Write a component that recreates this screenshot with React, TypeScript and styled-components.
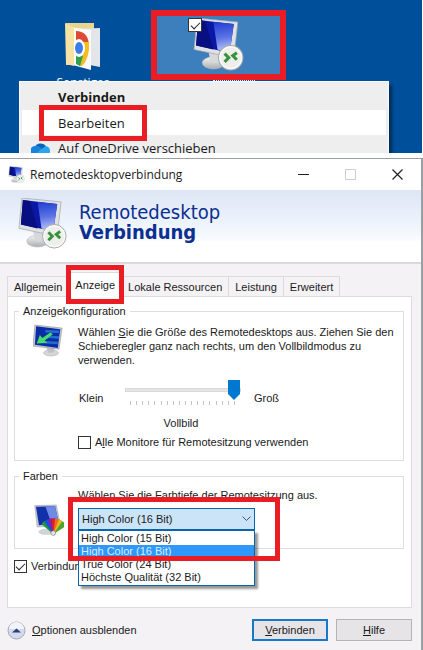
import React, { useState } from "react";
import styled, { createGlobalStyle } from "styled-components";

const Global = createGlobalStyle`
  *, *::before, *::after { box-sizing: border-box; }
  body { margin: 0; background: #fff; }
  button, input, select { font: inherit; color: inherit; margin: 0; }
`;

const classic = `"Liberation Sans", Arial, sans-serif`;
const modern = `"Open Sans", "Segoe UI", sans-serif`;
const heading = `"DejaVu Sans Condensed", "Noto Sans", Tahoma, sans-serif`;

const Page = styled.main`
  display: flex;
  flex-direction: column;
  gap: 5px;
  min-height: 100vh;
  font: 11px/14px ${classic};
  color: #1a1a1a;
`;

const Mark = styled.span<{ $inset: string; $w?: number }>`
  position: absolute;
  inset: ${(p) => p.$inset};
  border: ${(p) => p.$w ?? 5}px solid #ea1c24;
  pointer-events: none;
  z-index: 3;
`;

const CheckBox = styled.input`
  appearance: none;
  display: grid;
  place-items: center;
  flex: none;
  width: 13px;
  height: 13px;
  border: 1px solid #333;
  background: #fff;
  &:checked::after {
    content: "";
    width: 9px;
    height: 5px;
    border: solid #222;
    border-width: 0 0 1px 1px;
    transform: translateY(-1px) rotate(-45deg);
  }
`;

/* desktop */
const Desktop = styled.section`
  height: 153px;
  margin-right: 1px;
  overflow: hidden;
  background: #004f9b;
  font: 13px/18px ${modern};
`;

const Shortcuts = styled.div`
  display: flex;
  gap: 34px;
  height: 81px;
  padding: 10px 0 0 49px;
  overflow: hidden;
`;

const Shortcut = styled.div<{ $selected?: boolean }>`
  position: relative;
  display: flex;
  flex-direction: column;
  align-items: center;
  flex: none;
  width: ${(p) => (p.$selected ? 135 : 68)}px;
  height: ${(p) => (p.$selected ? 70 : 90)}px;
  padding-top: ${(p) => (p.$selected ? 8 : 13)}px;
  background: ${(p) => (p.$selected ? "#3c7fbc" : "transparent")};
`;

const ShortcutName = styled.span`
  color: #fff;
  font-size: 12px;
  margin-top: 3px;
`;

const Picked = styled(CheckBox)`
  position: absolute;
  left: 37px;
  top: 8px;
  width: 14px;
  height: 14px;
`;

const FocusDots = styled.span`
  position: absolute;
  left: 62px;
  top: 70px;
  width: 42px;
  border-top: 1px dotted #d8e4ee;
`;

const Menu = styled.div`
  display: flex;
  flex-direction: column;
  width: 370px;
  max-width: calc(100% - 20px);
  margin-left: 19px;
  padding: 2px;
  background: #eee;
  border: 1px solid #f8f8f8;
  border-bottom: 0;
  box-shadow: 3px 4px 3px rgba(0, 0, 0, 0.45);
`;

const MenuRow = styled.button<{ $bold?: boolean; $hover?: boolean }>`
  display: flex;
  align-items: center;
  gap: 7px;
  height: ${(p) => (p.$hover ? 25 : 26)}px;
  padding: 0 0 0 9px;
  border: 0;
  background: ${(p) => (p.$hover ? "#fff" : "transparent")};
  font-weight: ${(p) => (p.$bold ? 700 : 400)};
  text-align: left;
  white-space: nowrap;
`;

const MenuIcon = styled.span`
  display: flex;
  width: 20px;
`;

const MenuText = styled.span`
  position: relative;
`;

/* dialog */
const Dialog = styled.section`
  display: flex;
  flex: 1;
  flex-direction: column;
  background: #f5f2f6;
  border: solid #9a9fa3;
  border-width: 1px 2px 0 0;
`;

const TitleBar = styled.header`
  display: flex;
  align-items: center;
  gap: 5px;
  height: 31px;
  padding-left: 8px;
  background: #fff;
  font: 12px/16px ${modern};
`;

const Title = styled.span`
  flex: 1;
  white-space: nowrap;
`;

const CaptionButton = styled.button`
  display: grid;
  place-items: center;
  width: 47px;
  height: 30px;
  padding: 0;
  border: 0;
  background: none;
`;

const CaptionButtons = styled.div`
  display: flex;
`;

const Banner = styled.div`
  display: flex;
  gap: 11px;
  height: 74px;
  padding: 8px 0 0 17px;
  background: linear-gradient(#dde6f5, #edf3fc 45%, #f8fbff 69%, #fff 72%);
  border-bottom: 2px solid #dad8dc;
`;

const BannerTitle = styled.h1`
  margin: 4px 0 0;
  color: #0b3090;
  font: 400 20px/20px ${heading};
  strong { display: block; }
`;

const Body = styled.div`
  display: flex;
  flex-direction: column;
  padding: 12px 9px 8px 7px;
`;

const Tabs = styled.div`
  display: flex;
  align-items: flex-end;
  height: 20px;
`;

const Tab = styled.button<{ $active?: boolean }>`
  position: relative;
  height: ${(p) => (p.$active ? 25 : 20)}px;
  padding: 0 6px;
  border: 1px solid #dedbdf;
  border-bottom: 0;
  margin: 0 -1px ${(p) => (p.$active ? -1 : 0)}px 0;
  background: ${(p) => (p.$active ? "#fff" : "#f5f2f6")};
  z-index: ${(p) => (p.$active ? 1 : 0)};
  white-space: nowrap;
`;

const Panel = styled.div`
  display: flex;
  flex-direction: column;
  height: 312px;
  padding: 7px 7px 0 6px;
  background: #fff;
  border: 1px solid #dedbdf;
`;

const Group = styled.fieldset<{ $h: number }>`
  display: grid;
  grid-template-columns: 63px 1fr;
  align-items: start;
  min-width: 0;
  height: ${(p) => p.$h}px;
  margin: 0 0 8px;
  padding: 0;
  border: 1px solid #dedede;
`;

const Legend = styled.legend`
  margin-left: 4px;
  padding: 0 4px;
`;

const GroupIcon = styled.div<{ $top: number }>`
  display: flex;
  padding: ${(p) => p.$top}px 0 0 18px;
`;

const GroupContent = styled.div<{ $top: number }>`
  padding-top: ${(p) => p.$top}px;
`;

const Copy = styled.p`
  margin: 0;
  max-width: 330px;
`;

const SliderRow = styled.label`
  display: grid;
  grid-template-columns: 47px 116px auto;
  margin-top: 12px;
`;

const SliderWord = styled.span<{ $indent: number }>`
  padding: 12px 0 0 ${(p) => p.$indent}px;
`;

const SliderBox = styled.span`
  display: flex;
  flex-direction: column;
`;

const Range = styled.input`
  appearance: none;
  width: 100%;
  height: 22px;
  background: none;
  &::-webkit-slider-runnable-track {
    height: 4px;
    background: #e5e5e5;
    border: 1px solid #d9d9d9;
  }
  &::-webkit-slider-thumb {
    appearance: none;
    width: 12px;
    height: 20px;
    margin-top: -9px;
    background: #0078d0;
    clip-path: polygon(0 0, 100% 0, 100% 70%, 50% 100%, 0 70%);
  }
`;

const Ticks = styled.span`
  display: flex;
  justify-content: space-between;
  padding: 0 6px 0 5px;
  i { width: 1px; height: 4px; background: #c4c4c4; }
`;

const SliderValue = styled.output`
  display: block;
  width: 206px;
  margin-top: 11px;
  text-align: center;
`;

const Check = styled.label<{ $top: number }>`
  display: flex;
  align-items: center;
  gap: 4px;
  margin-top: ${(p) => p.$top}px;
  white-space: nowrap;
`;

const Combo = styled.div`
  position: relative;
  width: 177px;
  margin-top: 6px;
`;

const ComboSelect = styled.select`
  appearance: none;
  display: block;
  width: 100%;
  height: 22px;
  padding: 0 3px;
  border: 1px solid #0a64ad;
  border-radius: 0;
  background: #cce4f7;
`;

const Chevron = styled.svg`
  position: absolute;
  right: 4px;
  top: 8px;
  pointer-events: none;
`;

const Options = styled.ul`
  position: absolute;
  top: 22px;
  left: 0;
  right: 0;
  z-index: 2;
  margin: 0;
  padding: 1px 0;
  list-style: none;
  background: #fff;
  border: 1px solid #0a64ad;
  box-shadow: 3px 3px 2px rgba(0, 0, 0, 0.4);
`;

const Option = styled.li<{ $on: boolean }>`
  padding: 0 2px;
  line-height: 13px;
  color: ${(p) => (p.$on ? "#d8ecff" : "inherit")};
  background: ${(p) => (p.$on ? "#3097fb" : "transparent")};
`;

const Footer = styled.footer`
  display: flex;
  align-items: center;
  gap: 8px;
  margin-top: 11px;
`;

const Toggle = styled.button`
  display: flex;
  align-items: center;
  gap: 6px;
  margin-right: auto;
  padding: 0;
  border: 0;
  background: none;
`;

const Button = styled.button<{ $primary?: boolean }>`
  width: 76px;
  height: 22px;
  padding: 0;
  background: #e7e4e8;
  border: ${(p) => (p.$primary ? "2px solid #1878c8" : "1px solid #b5b3b6")};
`;

function RemoteIcon({ size }: { size: number }) {
  return (
    <svg width={size} height={size} viewBox="0 0 50 52" aria-hidden="true">
      <defs>
        <linearGradient id="glare" x1="0.4" y1="0" x2="0.5" y2="1">
          <stop offset="0" stopColor="#2440d4" />
          <stop offset="0.5" stopColor="#5a72e4" />
          <stop offset="1" stopColor="#c3cffc" />
        </linearGradient>
        <linearGradient id="stand" x1="0" y1="0" x2="0" y2="1">
          <stop offset="0" stopColor="#f5f5f3" />
          <stop offset="1" stopColor="#a9adb2" />
        </linearGradient>
      </defs>
      <ellipse cx="20" cy="44" rx="11" ry="6" fill="url(#stand)" stroke="#b4b7ba" strokeWidth=".6" />
      <path d="M15 32l12 3-1 8q-5 3-9-1z" fill="#d6d8da" />
      <path d="M4 0L44 4 40 39 1 31z" fill="#dfe1e3" stroke="#a0a5aa" strokeWidth=".7" />
      <path d="M5 2L40 6 36 34 3 27z" fill="#0b18a4" />
      <path d="M5 2l7 1 8 28-17-4z" fill="#080f80" />
      <path d="M20 4L40 6 36 34 24 31z" fill="url(#glare)" />
      <circle cx="37" cy="39" r="12" fill="#fafaf8" stroke="#a6a9aa" />
      <circle cx="37" cy="39" r="10" fill="#eeefed" />
      <path d="M31 35l4 4-4 4M43 34l-4 3 4 4" fill="none" stroke="#37913a" strokeWidth="3" />
    </svg>
  );
}

function ScreenIcon() {
  return (
    <svg width="31" height="33" viewBox="0 0 50 52" aria-hidden="true">
      <ellipse cx="29" cy="46" rx="12" ry="5" fill="#d3d6d9" stroke="#b6b9bc" />
      <path d="M21 36l13-2v11l-9 1z" fill="#bfc2c5" />
      <path d="M3 1l44 5-5 34-42-5z" fill="#c4c9ce" stroke="#9298a0" />
      <path d="M5 3l39 5-4 30-37-5z" fill="#0a2ca6" />
      <path d="M20 11l22 1M22 20l20 1M20 29l20 1" stroke="#2170cc" strokeWidth="4" />
      <path d="M28 13L15 22l-4-5-5 14 17-1-4-4 13-10z" fill="#45dc6a" />
    </svg>
  );
}

function ColorsIcon() {
  const fan = ["#1a9a3c", "#1d50d8", "#8a1cae", "#d8202c", "#ee6a1c", "#e8b81c", "#4aa82c"];
  return (
    <svg width="31" height="33" viewBox="0 0 52 54" aria-hidden="true">
      <ellipse cx="22" cy="46" rx="13" ry="5" fill="#d0d3d7" />
      <path d="M3 2l36-1 7 34-39 3z" fill="#c3c9d6" stroke="#9ba2b2" />
      <path d="M5 4l32-1 6 27-33 5z" fill="#1230a8" />
      <path d="M21 4l16-1 6 27-12 2z" fill="#6f8ae4" />
      {fan.map((c, i) => (
        <path key={c} d="M34 50l-5-25q5-4 10 0z" fill={c} transform={`rotate(${-38 + i * 14} 34 50)`} />
      ))}
      <circle cx="34" cy="48" r="4" fill="#e3e4e6" stroke="#777" />
    </svg>
  );
}

function FolderIcon() {
  return (
    <svg width="36" height="48" viewBox="0 0 36 48" aria-hidden="true">
      <path d="M1 0h28v42H1z" fill="#ead58d" />
      <path d="M9 6l26-1v39l-26-5z" fill="#e3e5ea" />
      <path d="M4 4l22 3v40L4 41z" fill="#fafafa" />
      <path d="M11 8q12 0 13 14H11z" fill="#df4934" />
      <path d="M17 19h7q1 16-7 24h-3z" fill="#f5bd20" />
      <path d="M11 30l7 3-3 10-4-2z" fill="#2fa052" />
      <ellipse cx="14" cy="25" rx="6" ry="9" fill="#fff" />
      <ellipse cx="14" cy="25" rx="4" ry="6" fill="#3e7de8" />
      <path d="M0 0l9 5v38L1 41z" fill="#f6e3a3" />
    </svg>
  );
}

const tabs = ["Allgemein", "Anzeige", "Lokale Ressourcen", "Leistung", "Erweitert"];
const depths = ["High Color (15 Bit)", "High Color (16 Bit)", "True Color (24 Bit)", "Höchste Qualität (32 Bit)"];

export default function App() {
  const [depth, setDepth] = useState(depths[1]);
  return (
    <Page>
      <Global />
      <Desktop>
        <Shortcuts>
          <Shortcut>
            <FolderIcon />
            <ShortcutName>Sonstiges</ShortcutName>
          </Shortcut>
          <Shortcut $selected>
            <RemoteIcon size={53} />
            <Picked type="checkbox" defaultChecked aria-label="Verknüpfung auswählen" />
            <FocusDots />
            <Mark $inset="0" $w={6} />
          </Shortcut>
        </Shortcuts>
        <Menu>
          <MenuRow $bold><MenuIcon /><MenuText>Verbinden</MenuText></MenuRow>
          <MenuRow $hover>
            <MenuIcon />
            <MenuText>
              Bearbeiten
              <Mark $inset="-9px -22px -9px -19px" />
            </MenuText>
          </MenuRow>
          <MenuRow>
            <MenuIcon>
              <svg width="19" height="14" viewBox="0 0 19 14" aria-hidden="true">
                <path d="M4 6a6 5 0 0 1 11-1l-6 6z" fill="#0f62b8" />
                <path d="M4 5q4-1 9 5l-1 4H4A4 4 0 0 1 4 5z" fill="#1683dc" />
                <path d="M9 9l6-4q4 1 4 5t-4 4H4z" fill="#29a5ee" />
              </svg>
            </MenuIcon>
            <MenuText>Auf OneDrive verschieben</MenuText>
          </MenuRow>
        </Menu>
      </Desktop>

      <Dialog aria-label="Remotedesktopverbindung">
        <TitleBar>
          <RemoteIcon size={17} />
          <Title>Remotedesktopverbindung</Title>
          <CaptionButtons>
            <CaptionButton aria-label="Minimieren">
              <svg width="11" height="11"><path d="M0 5.5h11" stroke="#222" /></svg>
            </CaptionButton>
            <CaptionButton aria-label="Maximieren" disabled>
              <svg width="11" height="11"><path d="M.5.5h10v10H.5z" fill="none" stroke="#ccc" /></svg>
            </CaptionButton>
            <CaptionButton aria-label="Schließen">
              <svg width="11" height="11"><path d="M.5.5l10 10M10.5.5l-10 10" stroke="#222" strokeWidth="1.2" /></svg>
            </CaptionButton>
          </CaptionButtons>
        </TitleBar>
        <Banner>
          <RemoteIcon size={51} />
          <BannerTitle>Remotedesktop<strong>Verbindung</strong></BannerTitle>
        </Banner>
        <Body>
          <Tabs role="tablist">
            {tabs.map((t, i) => (
              <Tab key={t} role="tab" aria-selected={i === 1} $active={i === 1}>
                {t}
                {i === 1 && <Mark $inset="-8px -3px -7px -3px" />}
              </Tab>
            ))}
          </Tabs>
          <Panel role="tabpanel">
            <Group $h={157}>
              <Legend>Anzeigekonfiguration</Legend>
              <GroupIcon $top={6}><ScreenIcon /></GroupIcon>
              <GroupContent $top={7}>
                <Copy>
                  Wählen <u>S</u>ie die Größe des Remotedesktops aus. Ziehen Sie den
                  Schieberegler ganz nach rechts, um den Vollbildmodus zu verwenden.
                </Copy>
                <SliderRow>
                  <SliderWord $indent={1}>Klein</SliderWord>
                  <SliderBox>
                    <Range type="range" min={0} max={17} defaultValue={17} aria-label="Größe des Remotedesktops" />
                    <Ticks>{Array.from({ length: 18 }, (_, i) => <i key={i} />)}</Ticks>
                  </SliderBox>
                  <SliderWord $indent={13}>Groß</SliderWord>
                </SliderRow>
                <SliderValue>Vollbild</SliderValue>
                <Check $top={5}>
                  <CheckBox type="checkbox" />
                  <span>A<u>l</u>le Monitore für Remotesitzung verwenden</span>
                </Check>
              </GroupContent>
            </Group>
            <Group $h={80}>
              <Legend>Farben</Legend>
              <GroupIcon $top={21}><ColorsIcon /></GroupIcon>
              <GroupContent $top={5}>
                <Copy as="label" htmlFor="depth">Wählen Sie die Farbtiefe der Remotesitzung aus.</Copy>
                <Combo>
                  <ComboSelect id="depth" value={depth} onChange={(e) => setDepth(e.target.value)}>
                    {depths.map((d) => <option key={d}>{d}</option>)}
                  </ComboSelect>
                  <Chevron width="9" height="6"><path d="M.5.5l4 4 4-4" fill="none" stroke="#3d5568" /></Chevron>
                  <Options>
                    {depths.map((d) => (
                      <Option key={d} $on={d === depth} onClick={() => setDepth(d)}>{d}</Option>
                    ))}
                  </Options>
                  <Mark $inset="-11px -25px -31px -10px" />
                </Combo>
              </GroupContent>
            </Group>
            <Check $top={2}>
              <CheckBox type="checkbox" defaultChecked />
              <span>Verbindungsleiste anzeigen</span>
            </Check>
          </Panel>
          <Footer>
            <Toggle>
              <svg width="19" height="19" viewBox="0 0 19 19" aria-hidden="true">
                <circle cx="9.500" cy="9.500" r="8.500" fill="#d3dbed" stroke="#a3a9bb" />
                <path d="M2 8a7.500 7 0 0 1 15 0z" fill="#f1f4fb" />
                <path d="M5 11.500l4.500-4 4.500 4z" fill="#26407a" />
              </svg>
              <span><u>O</u>ptionen ausblenden</span>
            </Toggle>
            <Button $primary><u>V</u>erbinden</Button>
            <Button><u>H</u>ilfe</Button>
          </Footer>
        </Body>
      </Dialog>
    </Page>
  );
}
